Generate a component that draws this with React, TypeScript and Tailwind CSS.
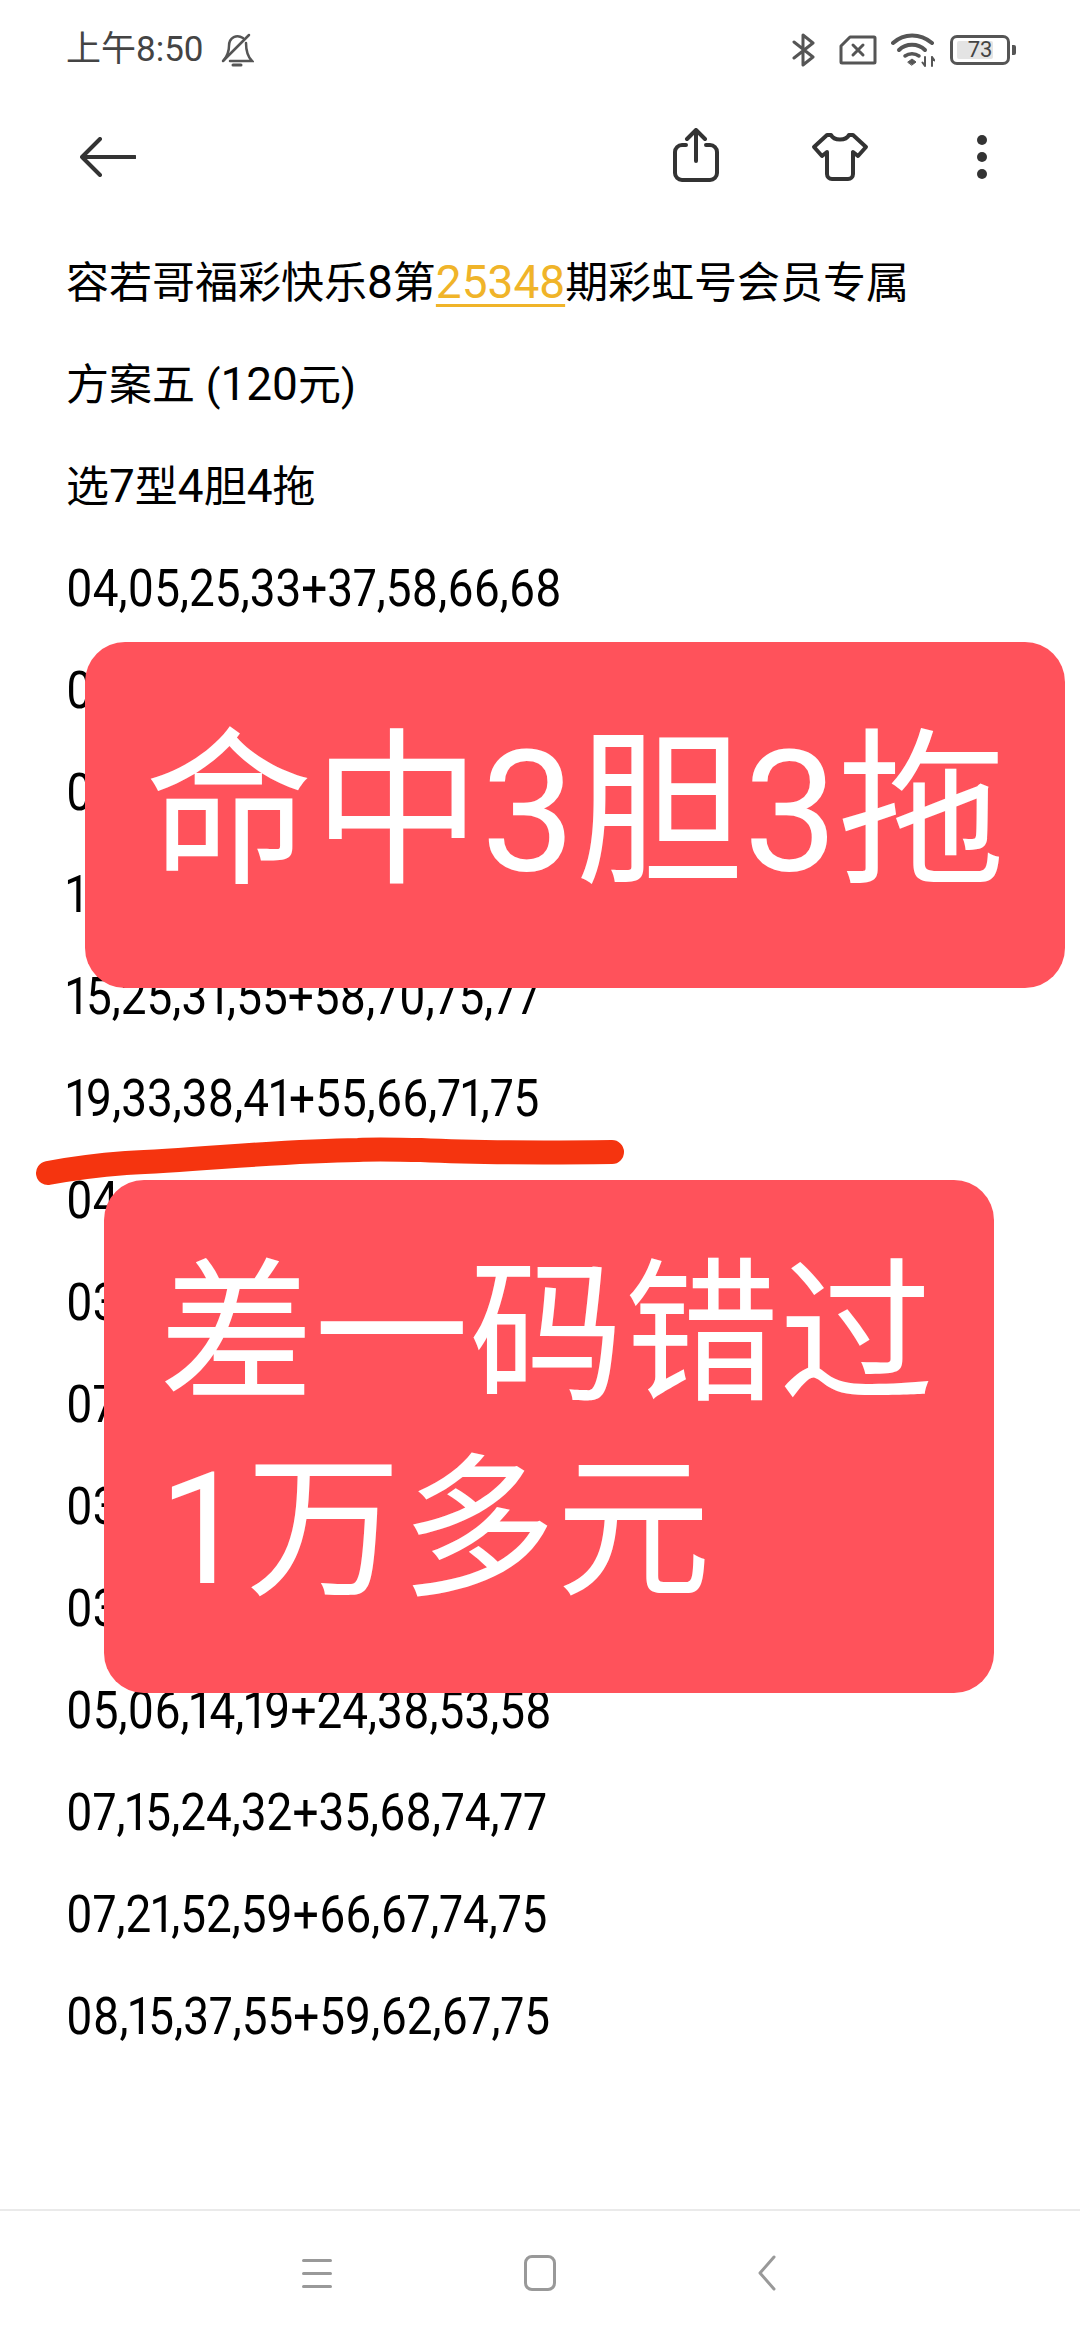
const lines = [
  "04,05,25,33+37,58,66,68",
  "03,12,21,36+40,52,63,71",
  "05,09,28,44+47,59,64,72",
  "11,17,26,39+43,56,69,78",
  "15,25,31,55+58,70,75,77",
  "19,33,38,41+55,66,71,75",
  "04,10,22,35+46,51,60,73",
  "03,08,16,29+42,54,61,76",
  "07,13,23,30+49,57,65,79",
  "03,18,27,34+48,50,62,74",
  "03,20,24,37+45,53,67,80",
  "05,06,14,19+24,38,53,58",
  "07,15,24,32+35,68,74,77",
  "07,21,52,59+66,67,74,75",
  "08,15,37,55+59,62,67,75",
];

function Row({ children }: { children: React.ReactNode }) {
  return <div className="h-[102px] flex items-center whitespace-nowrap">{children}</div>;
}

function Num({ children }: { children: React.ReactNode }) {
  return <span className="text-[46px] leading-none">{children}</span>;
}

export default function App() {
  return (
    <div className="relative w-[1080px] h-[2340px] bg-white overflow-hidden flex flex-col text-black font-['Roboto','Noto_Sans_CJK_SC',sans-serif]">
      <div className="h-[100px] pl-[66px] pr-[64px] flex items-center justify-between text-[#444]">
        <div className="flex items-center gap-[16px] text-[35px]">
          <span>上午8:50</span>
          <svg width="34" height="34" viewBox="0 0 32 34" fill="none" stroke="#555" strokeWidth="2.5" strokeLinecap="round">
            <path d="M2 28 L28 2" />
            <path d="M22 5 C16 1 8 4 8 13 C8 19 6 23 3 27" />
            <path d="M25 10 C25 19 27 24 31 28 L9 28" />
            <path d="M12 32 H20" strokeWidth="3" />
          </svg>
        </div>
        <div className="flex items-center">
          <svg width="24" height="36" viewBox="0 0 24 36" fill="none" stroke="#555" strokeWidth="3" strokeLinecap="round" strokeLinejoin="round" className="mr-[23px]">
            <path d="M2 10 L21 25 L11 33 V3 L21 11 L2 26" />
          </svg>
          <svg width="38" height="30" viewBox="0 0 38 30" fill="none" stroke="#555" strokeWidth="3" strokeLinejoin="round" className="mr-[14px]">
            <path d="M11 2 H35 a1 1 0 0 1 1 1 V27 a1 1 0 0 1 -1 1 H3 a1 1 0 0 1 -1 -1 V11 Z" />
            <path d="M14 10 L24 20 M24 10 L14 20" strokeLinecap="round" />
          </svg>
          <svg width="44" height="34" viewBox="0 0 44 34" fill="none" stroke="#555" strokeLinecap="round" className="mr-[15px]">
            <path d="M2 10 C13 0 29 0 41 10" strokeWidth="4" />
            <path d="M8 17 C15 10 27 10 34 17" strokeWidth="4" />
            <path d="M14 23 C18 20 24 20 28 23" strokeWidth="3.5" />
            <path d="M17 29 L21 26 L25 29 L21 32 Z" fill="#555" strokeWidth="1" />
            <path d="M34 24 V33 M31.5 29.5 L34 33 M41 33 V24 M41 24 L43.5 27.5" strokeWidth="2" />
          </svg>
          <div className="relative w-[60px] h-[30px] rounded-[7px] border-[3px] border-[#555] flex items-center justify-center">
            <div className="absolute left-[4px] top-[3px] bottom-[3px] w-[36px] bg-[#e4e4e4] rounded-[2px]" />
            <span className="relative text-[22px] leading-none text-[#444]">73</span>
          </div>
          <div className="w-[4px] h-[10px] ml-[2px] bg-[#555] rounded-r-[2px]" />
        </div>
      </div>

      <div className="h-[113px] pl-[80px] pr-[93px] flex items-center justify-between">
        <svg width="56" height="40" viewBox="0 0 56 40" fill="none" stroke="#333" strokeWidth="4" strokeLinecap="round" strokeLinejoin="round">
          <path d="M2 20 H55 M20 2 L2 20 L20 38" />
        </svg>
        <div className="flex items-center">
          <svg width="46" height="54" viewBox="0 0 46 54" fill="none" stroke="#333" strokeWidth="4" strokeLinecap="round" strokeLinejoin="round" className="mr-[92px] -mt-[3px]">
            <path d="M13 17 H9 a7 7 0 0 0 -7 7 V45 a7 7 0 0 0 7 7 H37 a7 7 0 0 0 7 -7 V24 a7 7 0 0 0 -7 -7 H33" />
            <path d="M23 33 V3 M14 11 L23 2 L32 11" />
          </svg>
          <svg width="58" height="50" viewBox="0 0 58 50" fill="none" stroke="#333" strokeWidth="4" strokeLinecap="round" strokeLinejoin="round" className="mr-[108px]">
            <path d="M20 3 C23 9 35 9 38 3 H42 L55 15 L47 24 L42 20 V42 a5 5 0 0 1 -5 5 H21 a5 5 0 0 1 -5 -5 V20 L11 24 L3 15 L16 3 Z" />
          </svg>
          <div className="flex flex-col gap-[7px]">
            <div className="w-[10px] h-[10px] rounded-full bg-[#333]" />
            <div className="w-[10px] h-[10px] rounded-full bg-[#333]" />
            <div className="w-[10px] h-[10px] rounded-full bg-[#333]" />
          </div>
        </div>
      </div>

      <div className="pl-[66px] mt-[19px] text-[43px]">
        <Row>
          <span>
            容若哥福彩快乐<Num>8</Num>第<span className="text-[46px] leading-none text-[#f0b429] underline decoration-[3px] underline-offset-[6px]">25348</span>期彩虹号会员专属
          </span>
        </Row>
        <Row>
          <span>
            方案五 (<Num>120</Num>元)
          </span>
        </Row>
        <Row>
          <span>
            选<Num>7</Num>型<Num>4</Num>胆<Num>4</Num>拖
          </span>
        </Row>
        {lines.map((l) => (
          <Row key={l}>
            <span className="inline-block origin-left scale-x-[0.9] text-[51px] proportional-nums">{l}</span>
          </Row>
        ))}
      </div>

      <div className="mt-auto h-[131px] border-t-2 border-[#eaeaea] flex items-center pl-[302px] pb-[5px]">
        <div className="w-[30px] flex flex-col gap-[10px]">
          <div className="h-[3px] bg-[#999] rounded" />
          <div className="h-[3px] bg-[#999] rounded" />
          <div className="h-[3px] bg-[#999] rounded" />
        </div>
        <div className="w-[32px] h-[36px] ml-[192px] rounded-[8px] border-[3px] border-[#999]" />
        <svg width="18" height="36" viewBox="0 0 18 36" fill="none" stroke="#999" strokeWidth="3" strokeLinecap="round" strokeLinejoin="round" className="ml-[202px]">
          <path d="M16 2 L2 18 L16 34" />
        </svg>
      </div>

      <div className="absolute left-[85px] top-[642px] w-[980px] h-[346px] rounded-[40px] bg-[#ff525b] text-white text-[168px] leading-none flex items-center pl-[60px] pb-[4px] whitespace-nowrap">
        命中3胆3拖
      </div>

      <svg className="absolute left-[30px] top-[1123px]" width="600" height="70" viewBox="0 0 600 70" fill="none">
        <path d="M18 50 C50 44 70 42 96 40 C180 36 250 28 328 27 C350 26 370 27 391 27 C450 30 500 30 582 29" stroke="#f5340f" strokeWidth="24" strokeLinecap="round" />
      </svg>

      <div className="absolute left-[104px] top-[1180px] w-[890px] h-[513px] rounded-[40px] bg-[#ff525b] text-white text-[155px] leading-[195px] pl-[55px] pt-[58px] whitespace-nowrap">
        <div>差一码错过</div>
        <div>1万多元</div>
      </div>
    </div>
  );
}
